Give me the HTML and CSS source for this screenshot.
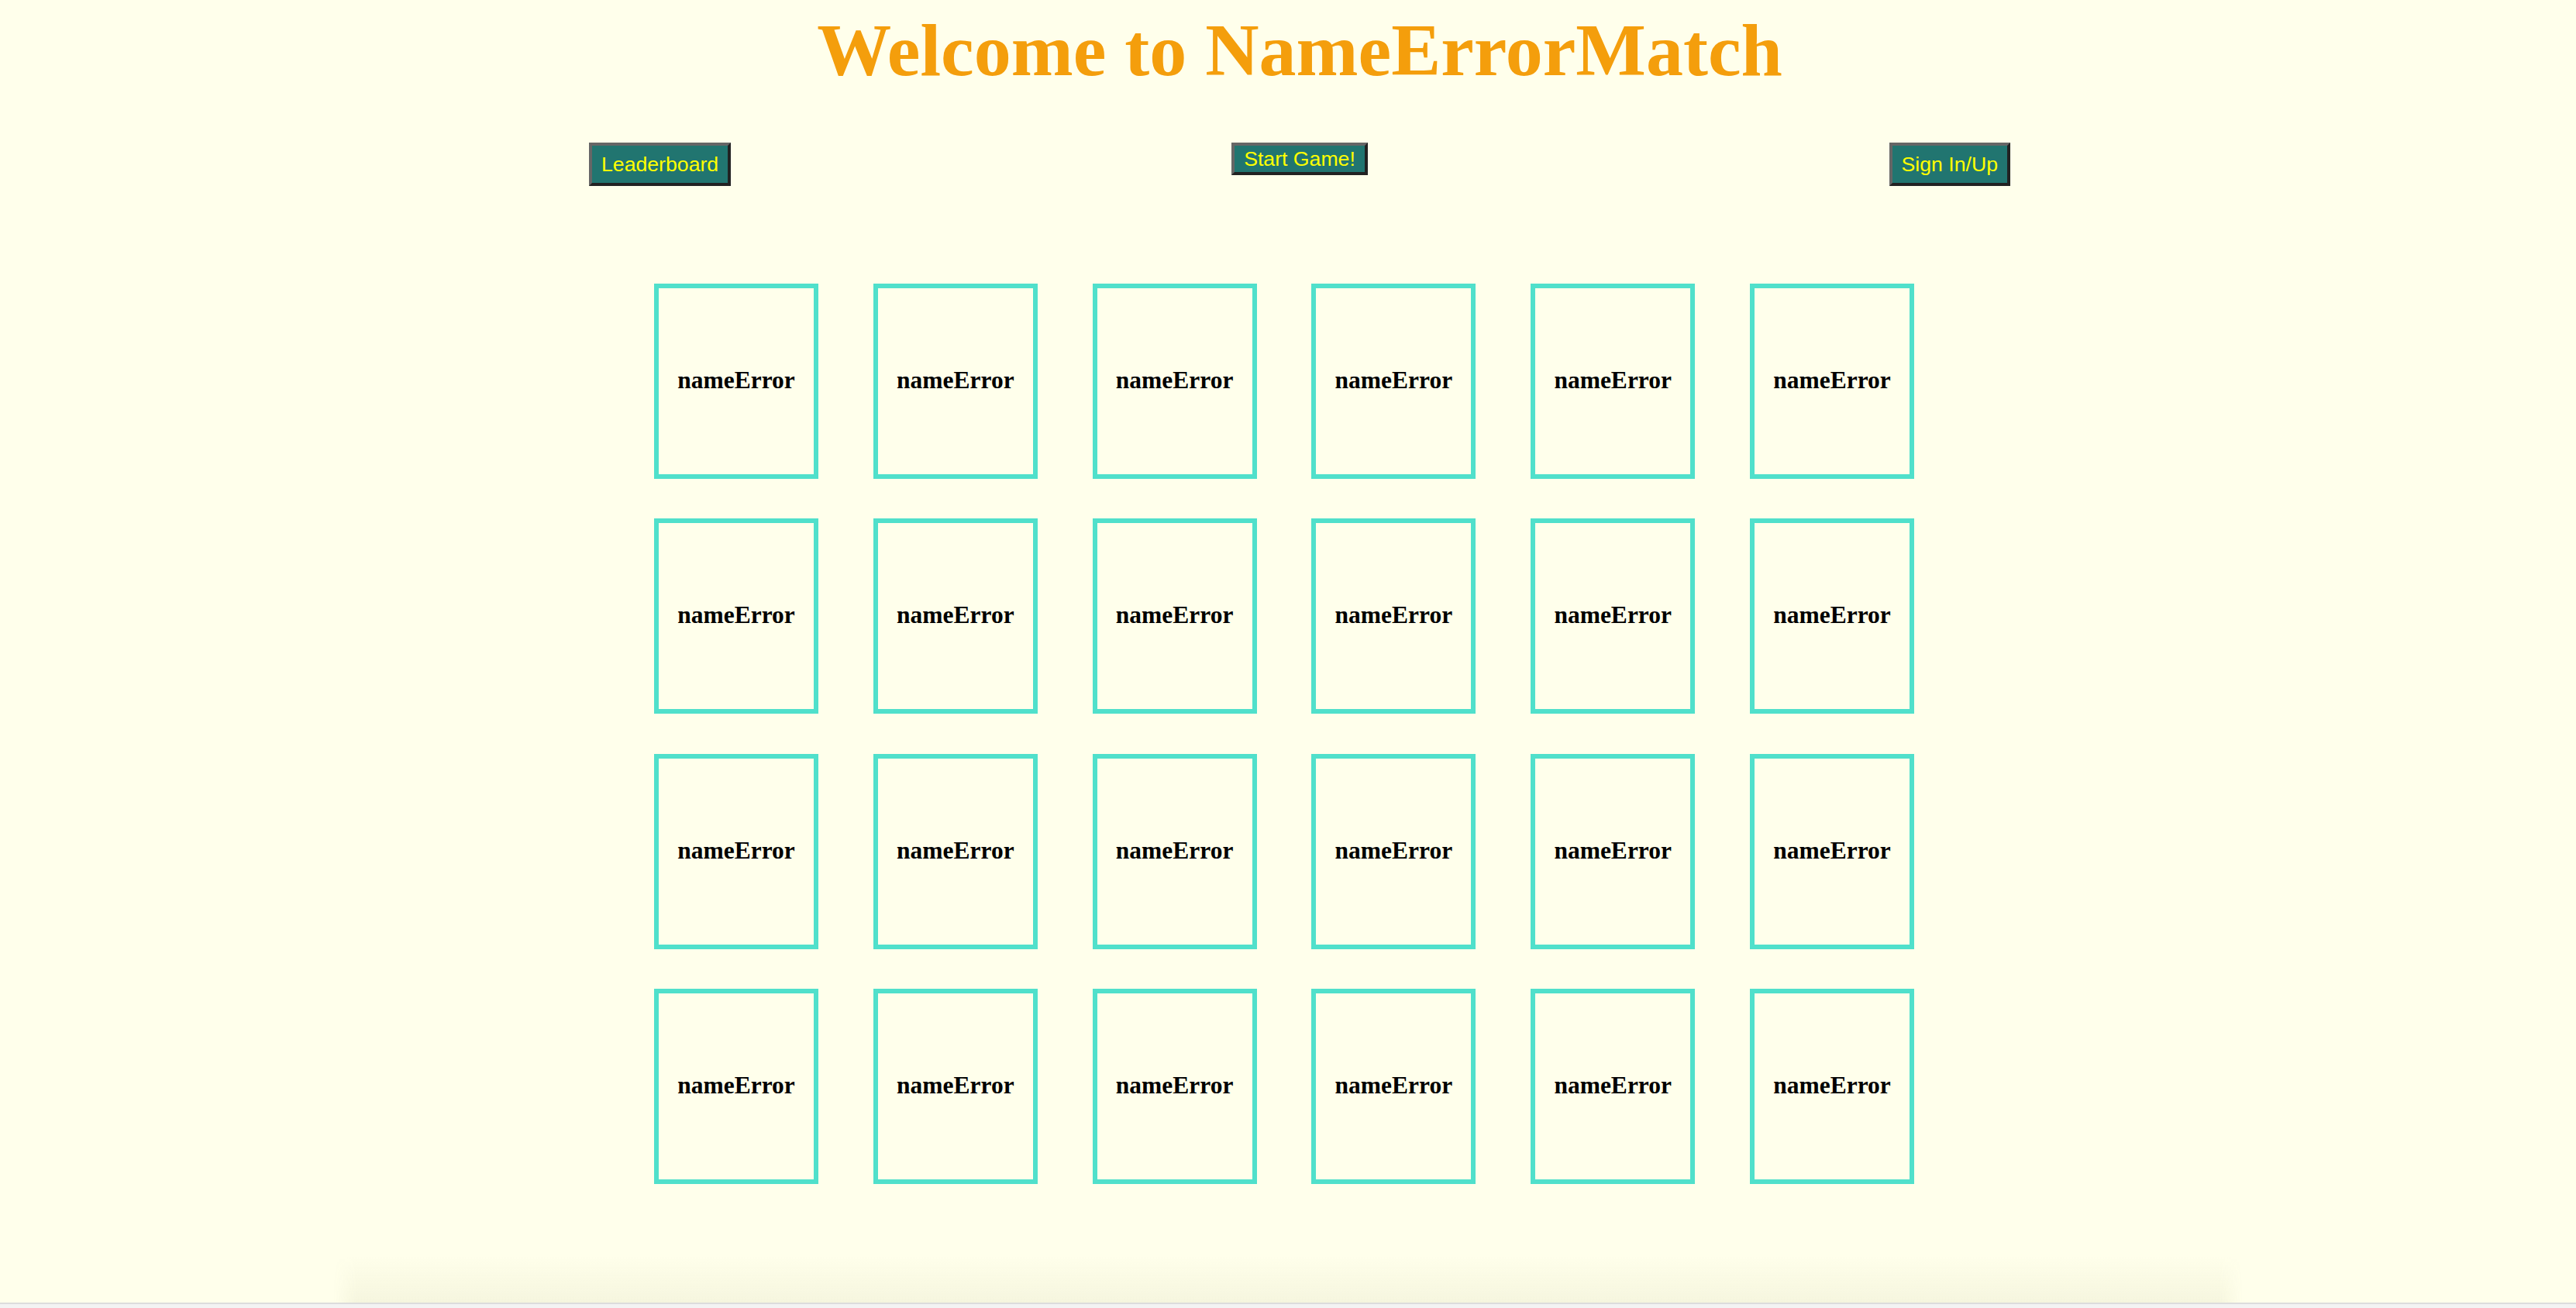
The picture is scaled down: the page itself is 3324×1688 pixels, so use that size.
FILE: index.html
```html
<!DOCTYPE html>
<html lang="en">
<head>
<meta charset="utf-8">
<title>NameErrorMatch</title>
<link rel="stylesheet" href="styles.css">
</head>
<body>
<div class="page">
  <header class="top">
    <h1 class="title">Welcome to NameErrorMatch</h1>
    <nav class="nav">
      <button class="btn btn-side btn-left">Leaderboard</button>
      <button class="btn btn-mid">Start Game!</button>
      <button class="btn btn-side btn-right">Sign In/Up</button>
    </nav>
  </header>
  <main class="board">
    <div class="grid">
      <div class="card">nameError</div>
      <div class="card">nameError</div>
      <div class="card">nameError</div>
      <div class="card">nameError</div>
      <div class="card">nameError</div>
      <div class="card">nameError</div>
      <div class="card">nameError</div>
      <div class="card">nameError</div>
      <div class="card">nameError</div>
      <div class="card">nameError</div>
      <div class="card">nameError</div>
      <div class="card">nameError</div>
      <div class="card">nameError</div>
      <div class="card">nameError</div>
      <div class="card">nameError</div>
      <div class="card">nameError</div>
      <div class="card">nameError</div>
      <div class="card">nameError</div>
      <div class="card">nameError</div>
      <div class="card">nameError</div>
      <div class="card">nameError</div>
      <div class="card">nameError</div>
      <div class="card">nameError</div>
      <div class="card">nameError</div>
    </div>
  </main>
  <footer class="foot">
    <div class="foot-shadow"></div>
    <div class="foot-line"></div>
    <div class="foot-bar"></div>
  </footer>
</div>
</body>
</html>
```

FILE: styles.css
```css
html, body {
  margin: 0;
  padding: 0;
}

body {
  background: #ffffeb;
  font-family: "Liberation Serif", "Times New Roman", serif;
}

.page {
  min-height: 100vh;
  display: flex;
  flex-direction: column;
}

.top {
  padding-left: 30px;
}

.title {
  margin: 10px 0 0;
  text-align: center;
  font-family: "Liberation Serif", "Times New Roman", serif;
  font-weight: bold;
  font-size: 96px;
  line-height: 110px;
  color: #f49e0c;
}

.nav {
  width: 1834px;
  margin: 64px auto 0;
  display: grid;
  grid-template-columns: 1fr auto 1fr;
  align-items: start;
}

.btn {
  font-family: "Liberation Sans", Arial, sans-serif;
  font-size: 26.67px;
  line-height: 30px;
  color: #ffff00;
  background: #217570;
  border-width: 4px;
  border-style: solid;
  border-color: #666666 #222222 #222222 #666666;
  margin: 0;
  cursor: pointer;
}

.btn-side {
  padding: 9px 12px;
}

.btn-mid {
  padding: 2px 12px;
}

.btn-left {
  justify-self: start;
}

.btn-right {
  justify-self: end;
}

.board {
  padding-right: 10px;
}

.grid {
  display: grid;
  grid-template-columns: repeat(6, 212px);
  column-gap: 70.8px;
  row-gap: 51.3px;
  justify-content: center;
  margin-top: 126px;
}

.card {
  box-sizing: border-box;
  width: 212px;
  height: 252px;
  border: 6px solid #50e0cb;
  display: flex;
  align-items: center;
  justify-content: center;
  padding-bottom: 2px;
  font-family: "Liberation Serif", "Times New Roman", serif;
  font-weight: bold;
  font-size: 31.5px;
  color: #000;
}

.foot {
  margin-top: auto;
}

.foot-shadow {
  height: 61px;
  margin: 0 430px;
  background: linear-gradient(to bottom, rgba(120, 120, 60, 0), rgba(120, 120, 60, 0.07));
  -webkit-mask-image: linear-gradient(to right, transparent 0, #000 30px, #000 calc(100% - 30px), transparent 100%);
  mask-image: linear-gradient(to right, transparent 0, #000 30px, #000 calc(100% - 30px), transparent 100%);
}

.foot-line {
  height: 2px;
  background: #dcdcdc;
}

.foot-bar {
  height: 5px;
  background: #f3f3f3;
}
```
